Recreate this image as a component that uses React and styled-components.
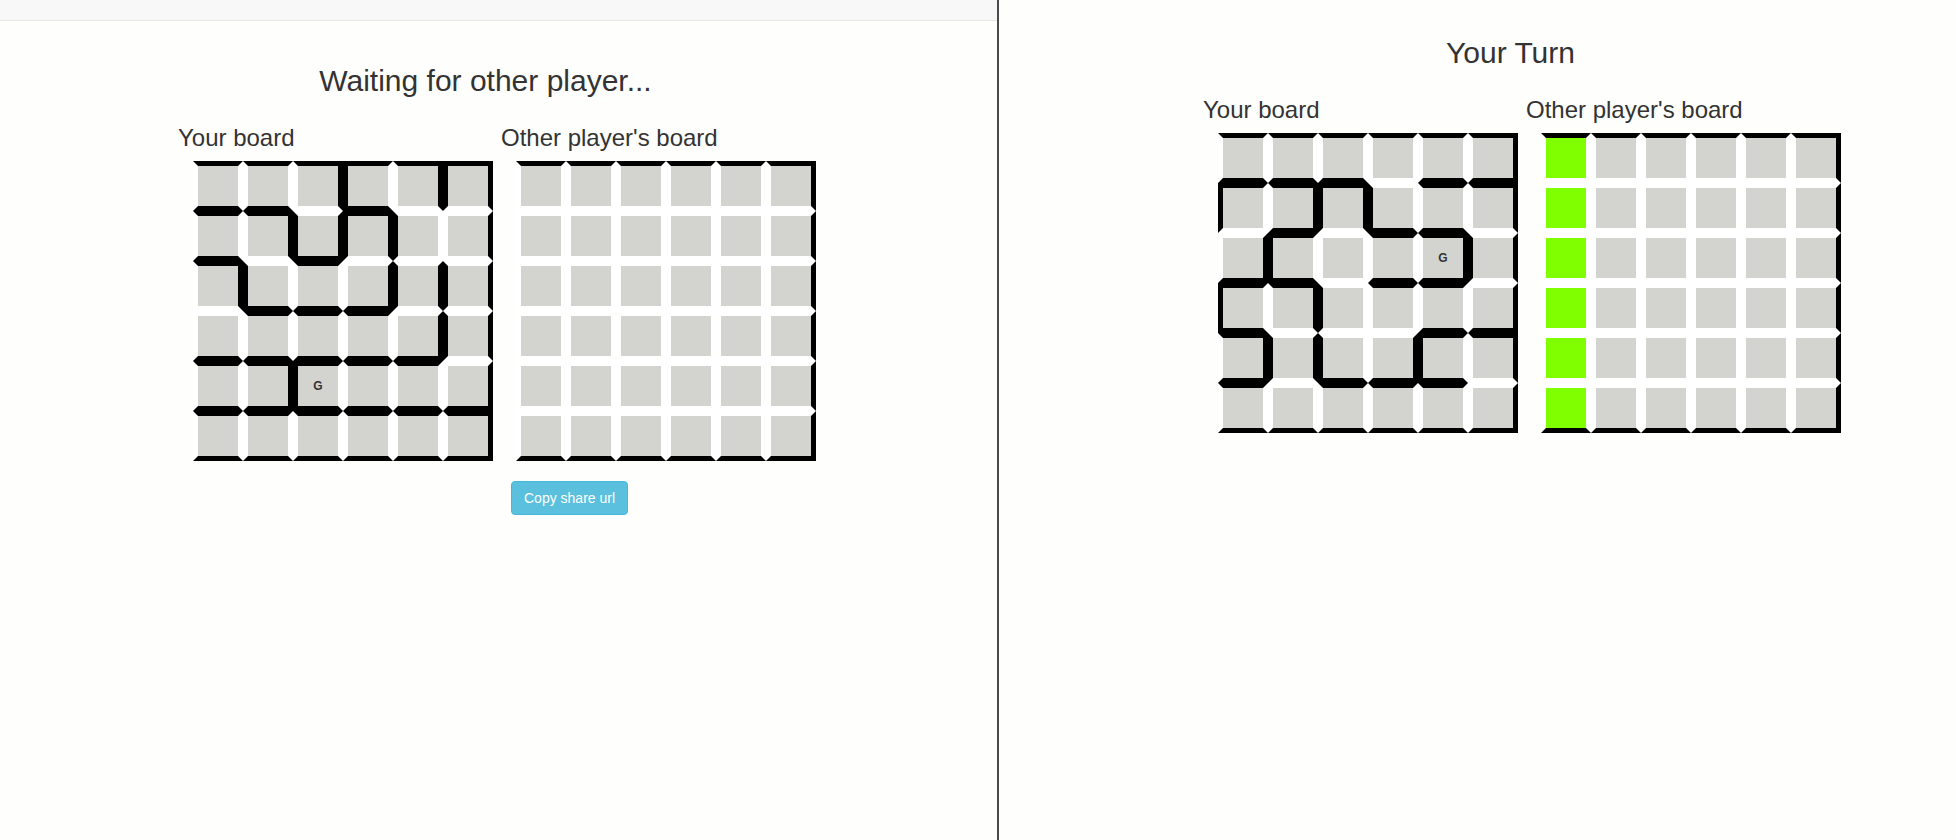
import React from "react";
import styled, { createGlobalStyle } from "styled-components";

// walls: "1" = wall (black border), "0" = open (white border)
// h: 7 horizontal lines of 6 segments, v: 6 rows of 7 vertical segments
const myBoardLeft = {
  h: ["111111", "110100", "101000", "011100", "111110", "111111", "111111"],
  v: ["0001011", "0011101", "0100111", "0000011", "0010001", "0000001"],
  goal: [4, 2],
};

const myBoardRight = {
  h: ["111111", "111011", "010110", "110110", "100011", "101110", "111111"],
  v: ["0000001", "1011001", "0100011", "1010001", "0110101", "0000001"],
  goal: [2, 4],
};

const hiddenBoard = {
  h: ["111111", "000000", "000000", "000000", "000000", "000000", "111111"],
  v: ["0000001", "0000001", "0000001", "0000001", "0000001", "0000001"],
  goal: null,
};

function Board({ board, tried }) {
  const cells = [];
  for (let r = 0; r < 6; r++) {
    for (let c = 0; c < 6; c++) {
      const isGoal = board.goal && board.goal[0] === r && board.goal[1] === c;
      cells.push(
        <Cell
          key={r + "-" + c}
          $top={board.h[r][c] === "1"}
          $bottom={board.h[r + 1][c] === "1"}
          $left={board.v[r][c] === "1"}
          $right={board.v[r][c + 1] === "1"}
          $fill={tried && tried.includes(r + "-" + c) ? "#7fff00" : "#d3d3d0"}
        >
          {isGoal ? "G" : ""}
        </Cell>
      );
    }
  }
  return <Grid>{cells}</Grid>;
}

const firstColumn = ["0-0", "1-0", "2-0", "3-0", "4-0", "5-0"];

export default function App() {
  return (
    <>
      <GlobalStyle />
      <Screen>
        <Panel $width="997px" $bg="#ffffff">
          <Navbar />
          <Main $top="43px" $left="178px">
            <Stage>
              <Title>Waiting for other player...</Title>
              <Boards>
                <Column>
                  <Heading>Your board</Heading>
                  <Board board={myBoardLeft} />
                </Column>
                <Column>
                  <Heading>Other player's board</Heading>
                  <Board board={hiddenBoard} />
                  <CopyButton type="button">Copy share url</CopyButton>
                </Column>
              </Boards>
            </Stage>
          </Main>
        </Panel>
        <Divider />
        <Panel $width="auto" $bg="#fefefc">
          <Main $top="36px" $left="204px">
            <Stage>
              <Title>Your Turn</Title>
              <Boards>
                <Column>
                  <Heading>Your board</Heading>
                  <Board board={myBoardRight} />
                </Column>
                <Column>
                  <Heading>Other player's board</Heading>
                  <Board board={hiddenBoard} tried={firstColumn} />
                </Column>
              </Boards>
            </Stage>
          </Main>
        </Panel>
      </Screen>
    </>
  );
}

const GlobalStyle = createGlobalStyle`
  html, body {
    margin: 0;
    padding: 0;
    background: #ffffff;
  }
  body {
    font-family: "Liberation Sans", Arial, Helvetica, sans-serif;
    font-size: 14px;
    color: #333333;
  }
`;

const Screen = styled.div`
  display: flex;
  width: 1956px;
  height: 840px;
  overflow: hidden;
`;

const Panel = styled.div`
  display: flex;
  flex-direction: column;
  flex: ${(p) => (p.$width === "auto" ? "1" : "none")};
  width: ${(p) => p.$width};
  height: 100%;
  background: ${(p) => p.$bg};
`;

const Navbar = styled.div`
  height: 20px;
  background: #f8f8f8;
  border-bottom: 1px solid #e7e7e7;
`;

const Divider = styled.div`
  width: 2px;
  height: 100%;
  background: #4a4a4a;
`;

const Main = styled.div`
  flex: 1;
  padding-top: ${(p) => p.$top};
  padding-left: ${(p) => p.$left};
  background: #fefefc;
`;

const Stage = styled.div`
  width: 615px;
`;

const Title = styled.h2`
  margin: 0 0 28px;
  font-size: 30px;
  font-weight: 500;
  line-height: 33px;
  text-align: center;
  color: #333333;
`;

const Boards = styled.div`
  display: flex;
  gap: 8px;
  width: max-content;
`;

const Column = styled.div`
  display: flex;
  flex-direction: column;
  align-items: flex-start;
`;

const Heading = styled.h3`
  margin: 0 0 10px;
  font-size: 24px;
  font-weight: 500;
  line-height: 26.4px;
  color: #333333;
`;

const Grid = styled.div`
  display: grid;
  grid-template-columns: repeat(6, 50px);
  grid-template-rows: repeat(6, 50px);
  margin-left: 15px;
`;

const Cell = styled.div`
  box-sizing: border-box;
  width: 50px;
  height: 50px;
  display: flex;
  align-items: center;
  justify-content: center;
  background: ${(p) => p.$fill};
  background-clip: padding-box;
  border-style: solid;
  border-width: 5px;
  border-top-color: ${(p) => (p.$top ? "#000" : "#fff")};
  border-bottom-color: ${(p) => (p.$bottom ? "#000" : "#fff")};
  border-left-color: ${(p) => (p.$left ? "#000" : "#fff")};
  border-right-color: ${(p) => (p.$right ? "#000" : "#fff")};
  font-size: 12px;
  font-weight: bold;
  color: #333333;
`;

const CopyButton = styled.button`
  margin: 20px 0 0 10px;
  padding: 6px 12px;
  font-family: inherit;
  font-size: 14px;
  line-height: 20px;
  color: #ffffff;
  background: #5bc0de;
  border: 1px solid #46b8da;
  border-radius: 4px;
  cursor: pointer;
`;
